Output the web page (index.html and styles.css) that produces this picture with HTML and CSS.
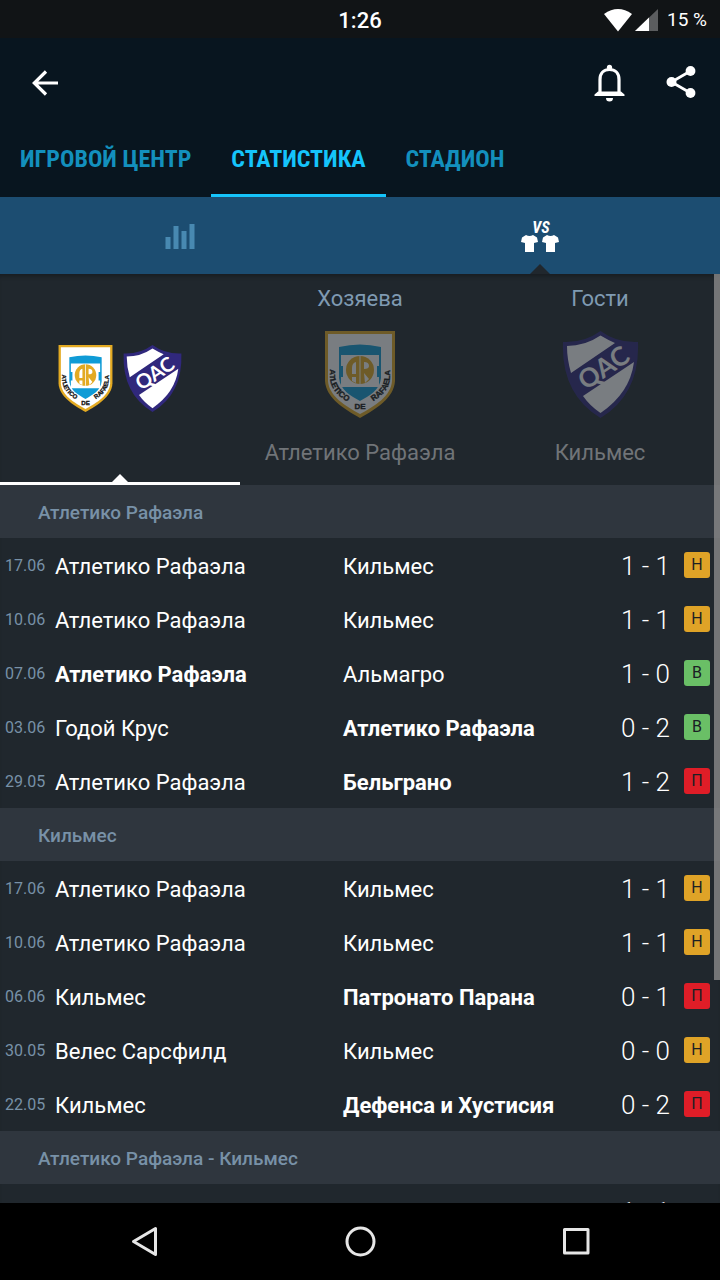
FILE: index.html
```html
<!DOCTYPE html>
<html lang="ru">
<head>
<meta charset="utf-8">
<meta name="viewport" content="width=device-width, initial-scale=1">
<title>Статистика</title>
<link rel="stylesheet" href="styles.css">
</head>
<body>
<header class="top">
  <div class="status">
    <span></span>
    <time class="clock">1:26</time>
    <div class="signals">
      <svg width="28" height="23" viewBox="0 0 28 23" aria-hidden="true"><path d="M0 5Q14-5 28 5L14 22.500Z" fill="#fff"/></svg>
      <svg class="cell" width="23" height="22" viewBox="0 0 23 22" aria-hidden="true"><path d="M23 0V22H0Z" fill="#5b5d5f"/><path d="M14 8.600V22H0Z" fill="#fff"/></svg>
      <span class="battery">15 %</span>
    </div>
  </div>
  <div class="toolbar">
    <button class="icon-btn back" aria-label="Назад">
      <svg width="28" height="28" viewBox="0 0 28 28" fill="none" stroke="#fff" stroke-width="3.200"><path d="M27 14H3M15 2.500L3.300 14L15 25.500"/></svg>
    </button>
    <button class="icon-btn" aria-label="Уведомления">
      <svg width="32" height="38" viewBox="0 0 32 38"><path d="M6 29V15.500C6 9 10 5.500 15.500 5.500S25 9 25 15.500V29" fill="none" stroke="#fff" stroke-width="3.200"/><circle cx="15.500" cy="3.300" r="2.600" fill="#fff"/><path d="M4 27.500H27L30.500 30.500V32H.500V30.500ZM12 34H19A3.500 3.500 0 0 1 12 34Z" fill="#fff"/></svg>
    </button>
    <button class="icon-btn" aria-label="Поделиться">
      <svg width="30" height="34" viewBox="0 0 30 34"><path d="M24.500 5L5.500 16L24.500 27" fill="none" stroke="#fff" stroke-width="2.800"/><g fill="#fff"><circle cx="24.500" cy="5" r="4.900"/><circle cx="5.500" cy="16" r="5"/><circle cx="24.500" cy="27" r="4.900"/></g></svg>
    </button>
  </div>
  <nav class="tabs">
    <a href="#center">ИГРОВОЙ ЦЕНТР</a>
    <a href="#stats" class="active" aria-current="page">СТАТИСТИКА</a>
    <a href="#stadium">СТАДИОН</a>
  </nav>
</header>

<nav class="modes">
  <button aria-label="Графики">
    <svg width="30" height="26" viewBox="0 0 30 26" fill="#4889b1"><rect x=".500" y="14" width="5" height="12"/><rect x="8.500" y="3" width="5" height="23"/><rect x="16.500" y="8" width="5" height="18"/><rect x="24.500" y="1" width="5" height="25"/></svg>
  </button>
  <button class="active" aria-label="Сравнение команд">
    <svg width="38" height="40" viewBox="0 0 38 40"><text class="vs" x="20" y="17">VS</text><g fill="#fff"><path id="shirt" d="M5 19Q8.500 21 12 19L16 21.500L17 26L13 27V36H4V27L0 26L1 21.500Z"/><use href="#shirt" x="21"/></g></svg>
  </button>
</nav>

<main class="pane">
  <div class="filters">
    <button class="filter active" aria-label="Атлетико Рафаэла и Кильмес">
      <span class="pair">
        <svg class="crest-s" viewBox="0 0 70 87">
          <g id="rafaela">
            <path d="M0 0H70V50C69 67 51 78 35 87C19 78 1 67 0 50Z" fill="#e3aa22"/>
            <path d="M3 3H67V50C66 65 50 75 35 83C20 75 4 65 3 50Z" fill="#fff"/>
            <path d="M14 16Q35 11 56 16V47C55 59 44 65 35 70C26 65 15 59 14 47Z" fill="#0f9bd6"/>
            <path d="M16 24H54V35H52V46H54V56H16V46H18V35H16Z" fill="#fff"/>
            <circle cx="35" cy="39" r="14" fill="#e3aa22"/>
            <path d="M27 43V37Q27 32 31 31V43ZM39 31Q44 31 44 35Q44 38 39 38ZM27 46H31V52L27 50ZM39 42L44 48L40 52ZM34.500 25H35.500V53H34.500Z" fill="#fff"/>
            <path id="arc-left" d="M5 34V46C5 58 14 66 26 73" fill="none"/>
            <path id="arc-right" d="M44 73C56 66 65 58 65 46V34" fill="none"/>
            <text class="motto"><textPath href="#arc-left" startOffset="50%">ATLETICO</textPath></text>
            <text class="motto" x="35" y="78">DE</text>
            <text class="motto"><textPath href="#arc-right" startOffset="50%">RAFAELA</textPath></text>
          </g>
        </svg>
        <svg class="crest-s wide" viewBox="0 0 75 87">
          <g id="quilmes">
            <path d="M37.500 0Q54 12 75 11Q77 63 37.500 87Q-2 63 0 11Q21 12 37.500 0Z" fill="#30287c"/>
            <path d="M37.500 4.500Q45 9 52 12L8 42Q4 28 4 15Q22 15 37.500 4.500Z" fill="#fff"/>
            <path d="M71 31Q67 62 37.500 82Q27 75 20 65Z" fill="#fff"/>
            <text class="qac" transform="translate(40 36) rotate(-34)" x="0" y="10">QAC</text>
          </g>
        </svg>
      </span>
    </button>
    <button class="filter">
      <span class="side">Хозяева</span>
      <svg class="crest" viewBox="0 0 70 87"><use href="#rafaela"/></svg>
      <span class="name">Атлетико Рафаэла</span>
    </button>
    <button class="filter">
      <span class="side">Гости</span>
      <svg class="crest" viewBox="0 0 75 87"><use href="#quilmes"/></svg>
      <span class="name">Кильмес</span>
    </button>
  </div>

  <h2>Атлетико Рафаэла</h2>
  <table>
    <colgroup><col class="c-date"><col class="c-home"><col><col class="c-score"><col class="c-mark"></colgroup>
    <tbody>
    <tr><td class="date">17.06</td><td>Атлетико Рафаэла</td><td>Кильмес</td><td class="score">1 - 1</td><td class="result"><span class="mark draw">Н</span></td></tr>
    <tr><td class="date">10.06</td><td>Атлетико Рафаэла</td><td>Кильмес</td><td class="score">1 - 1</td><td class="result"><span class="mark draw">Н</span></td></tr>
    <tr><td class="date">07.06</td><td class="won">Атлетико Рафаэла</td><td>Альмагро</td><td class="score">1 - 0</td><td class="result"><span class="mark win">В</span></td></tr>
    <tr><td class="date">03.06</td><td>Годой Крус</td><td class="won">Атлетико Рафаэла</td><td class="score">0 - 2</td><td class="result"><span class="mark win">В</span></td></tr>
    <tr><td class="date">29.05</td><td>Атлетико Рафаэла</td><td class="won">Бельграно</td><td class="score">1 - 2</td><td class="result"><span class="mark loss">П</span></td></tr>
    </tbody>
  </table>

  <h2>Кильмес</h2>
  <table>
    <colgroup><col class="c-date"><col class="c-home"><col><col class="c-score"><col class="c-mark"></colgroup>
    <tbody>
    <tr><td class="date">17.06</td><td>Атлетико Рафаэла</td><td>Кильмес</td><td class="score">1 - 1</td><td class="result"><span class="mark draw">Н</span></td></tr>
    <tr><td class="date">10.06</td><td>Атлетико Рафаэла</td><td>Кильмес</td><td class="score">1 - 1</td><td class="result"><span class="mark draw">Н</span></td></tr>
    <tr><td class="date">06.06</td><td>Кильмес</td><td class="won">Патронато Парана</td><td class="score">0 - 1</td><td class="result"><span class="mark loss">П</span></td></tr>
    <tr><td class="date">30.05</td><td>Велес Сарсфилд</td><td>Кильмес</td><td class="score">0 - 0</td><td class="result"><span class="mark draw">Н</span></td></tr>
    <tr><td class="date">22.05</td><td>Кильмес</td><td class="won">Дефенса и Хустисия</td><td class="score">0 - 2</td><td class="result"><span class="mark loss">П</span></td></tr>
    </tbody>
  </table>

  <h2>Атлетико Рафаэла - Кильмес</h2>
  <table>
    <colgroup><col class="c-date"><col class="c-home"><col><col class="c-score"><col class="c-mark"></colgroup>
    <tbody>
    <tr><td></td><td></td><td></td><td class="score">1 - 1</td><td></td></tr>
    </tbody>
  </table>
  <div class="thumb"></div>
</main>

<nav class="sysnav">
  <button aria-label="Назад"><svg width="32" height="32" viewBox="0 0 32 32"><path d="M27.500 2.500V28.500L5.500 15.500Z"/></svg></button>
  <button aria-label="Домой"><svg width="32" height="32" viewBox="0 0 32 32"><circle cx="16.500" cy="15.500" r="13.500"/></svg></button>
  <button aria-label="Недавние"><svg width="32" height="32" viewBox="0 0 32 32"><rect x="4.500" y="3.500" width="23.500" height="23.500"/></svg></button>
</nav>
</body>
</html>
```

FILE: styles.css
```css
* { box-sizing: border-box; }

body {
  margin: 0;
  height: 100vh;
  display: flex;
  flex-direction: column;
  background: #20272d;
  color: #fff;
  font-family: Roboto, "Noto Sans", sans-serif;
  overflow: hidden;
}

button {
  margin: 0;
  padding: 0;
  border: 0;
  background: none;
  color: inherit;
  font: inherit;
}

svg {
  display: block;
  overflow: visible;
}

.top { background: #08151f; }

.status {
  display: grid;
  grid-template-columns: 1fr auto 1fr;
  align-items: center;
  height: 38px;
  padding: 0 13px;
  background: #111416;
}

.clock {
  padding-top: 2px;
  font-size: 22px;
  font-weight: 500;
  line-height: 38px;
}

.signals {
  display: flex;
  justify-content: flex-end;
  align-items: center;
  gap: 3px;
}

.battery {
  padding-left: 6px;
  font-size: 19px;
  line-height: 38px;
}

.toolbar {
  display: flex;
  align-items: center;
  gap: 40px;
  height: 90px;
  padding: 0 24px 0 31px;
}

.back { margin-right: auto; }

.tabs {
  display: flex;
  height: 69px;
}

.tabs a {
  padding: 0 20px;
  border-bottom: 3px solid transparent;
  color: #1390bd;
  font-family: "Roboto Condensed", "Liberation Sans Narrow", Roboto, sans-serif;
  font-size: 24px;
  font-weight: 700;
  line-height: 62px;
  text-decoration: none;
  white-space: nowrap;
}

.tabs .active {
  border-color: #15c4fb;
  color: #15c4fb;
}

.modes {
  display: flex;
  height: 77px;
  background: #1c4d71;
}

.modes button {
  position: relative;
  flex: 1;
  display: flex;
  justify-content: center;
  align-items: center;
}

.modes .active::after {
  content: "";
  position: absolute;
  bottom: 0;
  left: 50%;
  margin-left: -10px;
  border: solid transparent;
  border-width: 0 10px 10px;
  border-bottom-color: #20272d;
}

.vs {
  fill: #fff;
  font: italic 700 16px "Roboto Condensed", Roboto, sans-serif;
  text-anchor: middle;
}

.pane {
  position: relative;
  flex: 1;
  min-height: 0;
  overflow: hidden;
  box-shadow: inset 0 5px 4px -3px #171c20;
}

.filters {
  display: flex;
  height: 211px;
}

.filter {
  position: relative;
  flex: 1;
  display: flex;
  flex-direction: column;
  align-items: center;
  font-size: 22px;
  line-height: 26px;
}

.filter.active {
  justify-content: center;
  border-bottom: 3px solid #fff;
}

.filter.active::after {
  content: "";
  position: absolute;
  bottom: 0;
  left: 50%;
  margin-left: -8px;
  border: solid transparent;
  border-width: 0 8px 8px;
  border-bottom-color: #fff;
}

.pair {
  display: flex;
  gap: 10px;
}

.crest-s {
  width: 55px;
  height: 67px;
}

.crest-s.wide { width: 59px; }

.side {
  padding-top: 12px;
  color: #7f9ab2;
}

.crest {
  height: 87px;
  margin: 19px 0 22px;
  opacity: .4;
}

.name { color: #707478; }

.motto {
  fill: #111;
  stroke: #111;
  stroke-width: .4;
  font: 700 8px "Liberation Sans", sans-serif;
  text-anchor: middle;
}

.qac {
  fill: #fff;
  font: 700 26px Lato, sans-serif;
  text-anchor: middle;
}

h2 {
  margin: 0;
  padding: 2px 38px 0;
  background: #2f363e;
  color: #7891a7;
  font-size: 19px;
  font-weight: 500;
  line-height: 51px;
}

table {
  width: 100%;
  table-layout: fixed;
  border-collapse: collapse;
}

.c-date { width: 55px; }
.c-home { width: 40%; }
.c-score { width: 80px; }
.c-mark { width: 50px; }

td {
  height: 54px;
  padding: 3px 0 0;
  font-size: 22px;
  line-height: 26px;
  white-space: nowrap;
}

td.date {
  padding: 2px 0 0 5px;
  color: #7891a7;
  font-size: 16px;
}

.won { font-weight: 700; }

td.score {
  padding: 1px 0 0;
  font-size: 26px;
  font-weight: 300;
  text-align: right;
}

td.result { padding: 0; }

.mark {
  display: block;
  width: 26px;
  margin-left: 14px;
  border-radius: 3px;
  color: #1b2024;
  font-size: 16px;
  text-align: center;
}

.draw { background: #dfa327; }
.win { background: #6abf66; }
.loss { background: #df1d27; }

.thumb {
  position: absolute;
  top: 0;
  right: 0;
  width: 6px;
  height: 76%;
  background: rgba(138, 138, 138, .8);
}

.sysnav {
  display: flex;
  height: 77px;
  padding: 0 5%;
  background: #000;
}

.sysnav button {
  flex: 1;
  display: flex;
  justify-content: center;
  align-items: center;
}

.sysnav svg {
  fill: none;
  stroke: #e6e6e6;
  stroke-width: 3;
  stroke-linejoin: round;
}
```
